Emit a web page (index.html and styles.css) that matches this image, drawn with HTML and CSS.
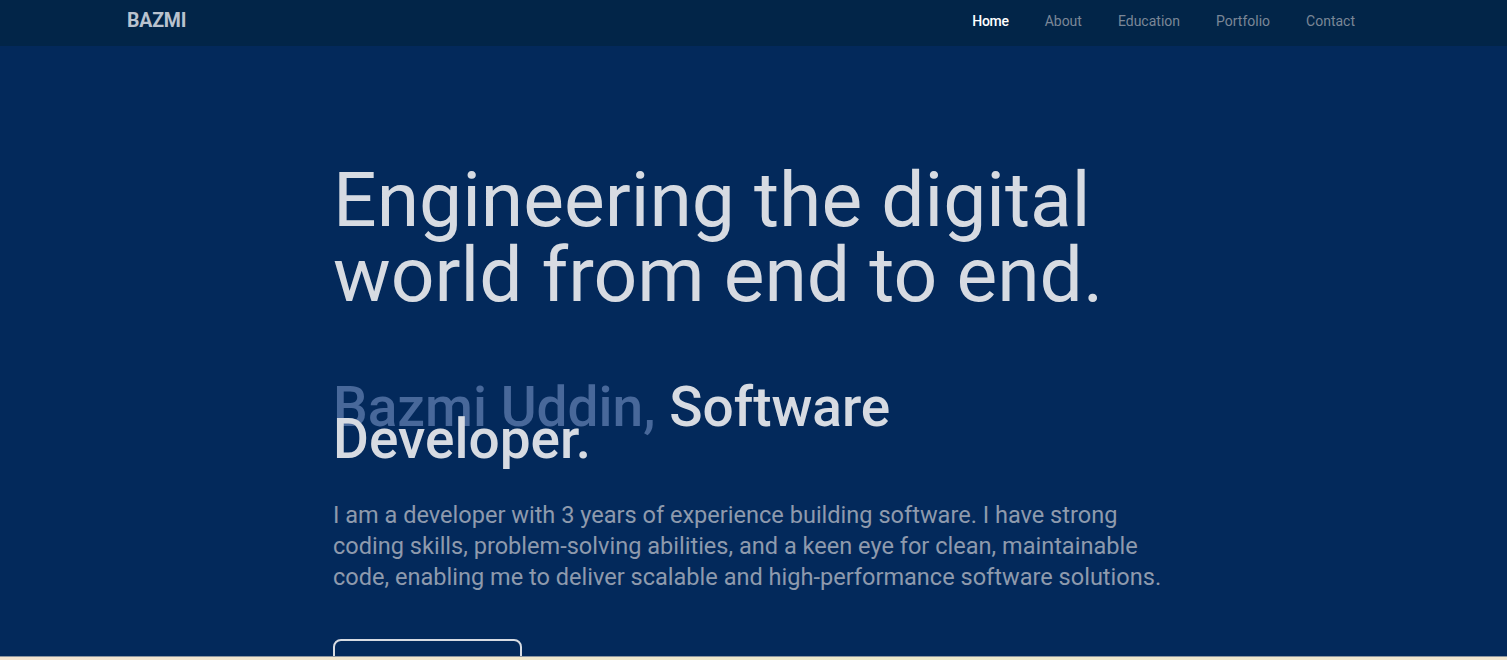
FILE: index.html
```html
<!DOCTYPE html>
<html lang="en">
<head>
<meta charset="utf-8">
<title>Bazmi</title>
<link rel="stylesheet" href="styles.css">
</head>
<body>
<nav class="navbar">
  <a class="brand" href="#">BAZMI</a>
  <ul class="nav-links">
    <li><a class="active" href="#">Home</a></li>
    <li><a href="#">About</a></li>
    <li><a href="#">Education</a></li>
    <li><a href="#">Portfolio</a></li>
    <li><a href="#">Contact</a></li>
  </ul>
</nav>
<section class="hero">
  <div class="hero-inner">
    <h1 class="headline">Engineering the digital world from end to end.</h1>
    <h2 class="subtitle"><span class="name">Bazmi Uddin,</span> Software Developer.</h2>
    <p class="intro">I am a developer with 3 years of experience building software. I have strong coding skills, problem-solving abilities, and a keen eye for clean, maintainable code, enabling me to deliver scalable and high-performance software solutions.</p>
    <a class="btn" href="#">Get in touch</a>
  </div>
</section>
<section class="next"></section>
</body>
</html>
```
FILE: styles.css
```css
* { box-sizing: border-box; }
html, body { margin: 0; padding: 0; }
body {
  font-family: Roboto, "Liberation Sans", sans-serif;
  background: #f2e8d2;
  overflow: hidden;
}
a { text-decoration: none; }
.navbar {
  height: 46px;
  background: #022548;
  display: flex;
  align-items: center;
  justify-content: space-between;
  padding: 0 152px 6px 127px;
}
.brand {
  color: #b9c2ce;
  font-weight: 700;
  font-size: 19.5px;
  letter-spacing: -0.2px;
}
.nav-links {
  list-style: none;
  display: flex;
  gap: 36px;
  margin: 0;
  padding: 0;
}
.nav-links a {
  color: #7b8797;
  font-size: 14px;
}
.nav-links a.active { color: #ffffff; font-weight: 500; letter-spacing: -0.3px; }
.hero {
  background: #03295b;
  height: 611px;
  border-bottom: 1px solid #8c95a0;
  overflow: hidden;
}
.hero-inner {
  padding: 117px 0 0 333px;
  max-width: 1180px;
}
.headline {
  margin: 0;
  font-size: 76.8px;
  font-weight: 400;
  line-height: 75px;
  color: #d7dbe2;
  max-width: 820px;
}
.subtitle {
  margin: 78px 0 0;
  font-size: 55px;
  font-weight: 500;
  line-height: 32px;
  color: #d7dbe2;
  max-width: 600px;
}
.subtitle .name { color: #48689a; }
.intro {
  margin: 45px 0 0;
  font-size: 23.55px;
  line-height: 31px;
  color: #8e9aad;
  max-width: 840px;
}
.btn {
  display: inline-block;
  margin-top: 46px;
  width: 189px;
  height: 64px;
  line-height: 60px;
  text-align: center;
  padding-top: 20px;
  color: #d7dbe2;
  border: 2px solid #d7dbe2;
  border-radius: 8px;
}
.next {
  height: 10px;
  background: linear-gradient(90deg, #f4e4d0, #eee9c9 60%, #f2e6cf);
}
```
